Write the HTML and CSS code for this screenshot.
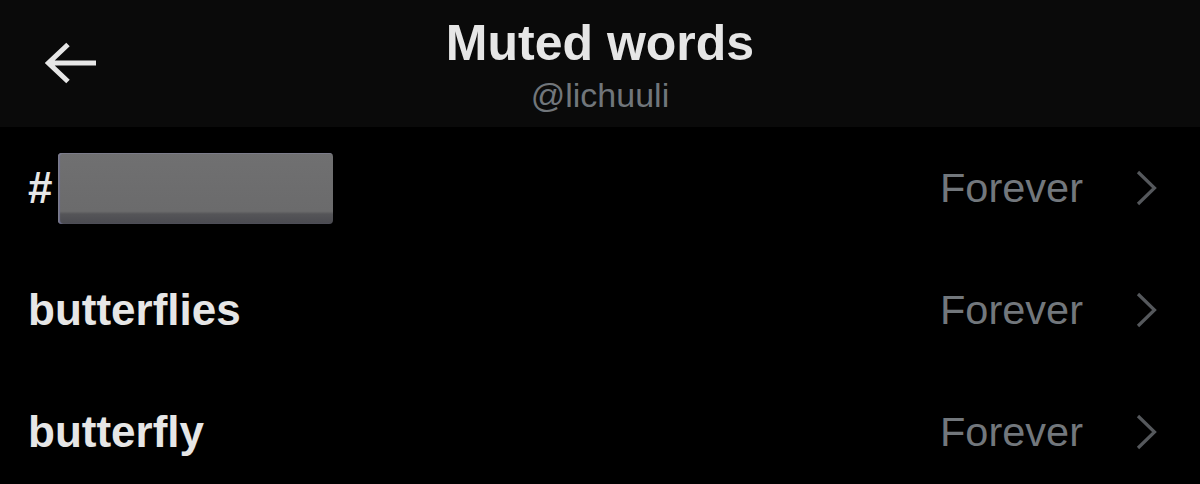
FILE: index.html
```html
<!DOCTYPE html>
<html>
<head>
<meta charset="utf-8">
<link rel="stylesheet" href="styles.css">
</head>
<body>
<div class="screen">
  <header class="topbar">
    <div class="back">
      <svg width="52" height="42" viewBox="0 0 52 42"><path d="M51 21H3.5M23 2.5L3.5 21L23 39.5" fill="none" stroke="#e7e7e7" stroke-width="5"/></svg>
    </div>
    <div class="titles">
      <div class="title">Muted words</div>
      <div class="handle">@lichuuli</div>
    </div>
    <div></div>
  </header>
  <div class="list">
    <div class="row">
      <div class="word"><span>#</span><span class="redact"></span></div>
      <div class="meta"><span class="dur">Forever</span><svg class="chev" width="22" height="36" viewBox="0 0 22 36"><path d="M2 2L18.5 18L2 34" fill="none" stroke="#55585c" stroke-width="3.2"/></svg></div>
    </div>
    <div class="row">
      <div class="word">butterflies</div>
      <div class="meta"><span class="dur">Forever</span><svg class="chev" width="22" height="36" viewBox="0 0 22 36"><path d="M2 2L18.5 18L2 34" fill="none" stroke="#55585c" stroke-width="3.2"/></svg></div>
    </div>
    <div class="row">
      <div class="word">butterfly</div>
      <div class="meta"><span class="dur">Forever</span><svg class="chev" width="22" height="36" viewBox="0 0 22 36"><path d="M2 2L18.5 18L2 34" fill="none" stroke="#55585c" stroke-width="3.2"/></svg></div>
    </div>
  </div>
</div>
</body>
</html>
```
FILE: styles.css
```css
html, body {
  margin: 0;
  padding: 0;
  background: #000;
}
.screen {
  width: 1200px;
  height: 484px;
  overflow: hidden;
  background: #000;
  font-family: "Liberation Sans", Arial, sans-serif;
}
.topbar {
  height: 127px;
  background: #0a0a0a;
  display: grid;
  grid-template-columns: 1fr auto 1fr;
  align-items: start;
}
.back {
  padding-left: 45px;
  padding-top: 42px;
}
.back svg {
  display: block;
}
.titles {
  display: flex;
  flex-direction: column;
  align-items: center;
  padding-top: 15px;
}
.title {
  font-size: 50px;
  line-height: 56px;
  font-weight: 700;
  color: #e6e6e6;
}
.handle {
  font-size: 34px;
  line-height: 40px;
  margin-top: 4px;
  color: #71767b;
}
.list {
  display: flex;
  flex-direction: column;
}
.row {
  height: 122px;
  display: flex;
  align-items: center;
  justify-content: space-between;
  padding: 0 42px 0 28px;
}
.word {
  display: flex;
  align-items: center;
  gap: 6px;
  font-size: 44px;
  font-weight: 700;
  color: #e6e6e6;
}
.redact {
  display: block;
  width: 275px;
  height: 71px;
  border-radius: 4px;
  background: linear-gradient(to bottom, #707071 0%, #6b6b6c 82%, #555558 86%, #4a4a50 100%);
  box-shadow: inset 1px 1px 0 #7c7c8a, inset 2px 0 1px #6f7090;
}
.meta {
  display: flex;
  align-items: center;
}
.dur {
  font-size: 41.5px;
  color: #72777c;
}
.chev {
  display: block;
  margin-left: 53px;
}
```
